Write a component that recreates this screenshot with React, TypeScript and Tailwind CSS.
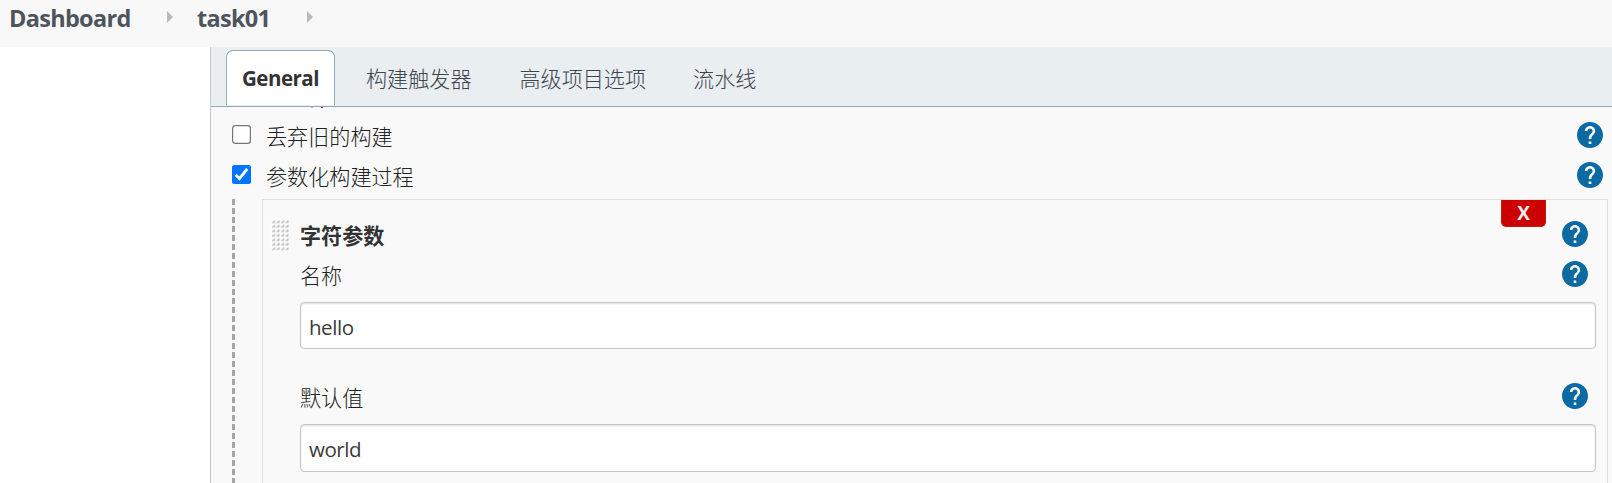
import React from "react";

function HelpIcon() {
  return (
    <svg viewBox="2 2 20 20" className="block h-[26px] w-[26px] shrink-0">
      <circle cx="12" cy="12" r="9" fill="#fff" />
      <path
        fill="#0b6aa2"
        d="M12 2C6.48 2 2 6.48 2 12s4.48 10 10 10 10-4.48 10-10S17.52 2 12 2zm1 17h-2v-2h2v2zm2.07-7.75l-.9.92C13.45 12.9 13 13.5 13 15h-2v-.5c0-1.1.45-2.1 1.17-2.83l1.24-1.26c.37-.36.59-.86.59-1.41 0-1.1-.9-2-2-2s-2 .9-2 2H8c0-2.21 1.79-4 4-4s4 1.79 4 4c0 .88-.36 1.68-.93 2.25z"
      />
    </svg>
  );
}

function Chevron() {
  return (
    <svg viewBox="0 0 6 12" className="block h-3 w-1.5 shrink-0">
      <path d="M0 0L6 6L0 12Z" fill="#bababa" />
    </svg>
  );
}

function Checkbox({ checked }: { checked?: boolean }) {
  return (
    <svg viewBox="0 0 19 19" className="mb-px block h-[19px] w-[19px] shrink-0">
      {checked ? (
        <>
          <rect width="19" height="19" rx="2.5" fill="#0075ff" />
          <path d="M3.6 9.8L7.4 13.6L15.2 4" fill="none" stroke="#fff" strokeWidth="2.8" />
        </>
      ) : (
        <rect x="0.6" y="0.6" width="17.8" height="17.8" rx="2.6" fill="#fff" stroke="#767676" strokeWidth="1.2" />
      )}
    </svg>
  );
}

function Grip() {
  return (
    <svg viewBox="0 0 18 32" className="block h-8 w-[18px] shrink-0">
      <defs>
        <pattern id="grip" width="4.5" height="4.5" patternUnits="userSpaceOnUse">
          <rect width="4.5" height="4.5" fill="#fcfcfc" />
          <path d="M1 3.9L3.9 1V3.9Z" fill="#aaa" />
          <rect x="1.2" y="2.6" width="2.6" height="1.4" fill="#c4c4c4" />
        </pattern>
      </defs>
      <rect width="18" height="31.5" fill="url(#grip)" />
    </svg>
  );
}

function OptionRow({ label, checked }: { label: string; checked?: boolean }) {
  return (
    <div className="flex h-10 items-center pr-[9px] pl-[21px]">
      <Checkbox checked={checked} />
      <span className="ml-[15px] pt-1 text-[21.1px] leading-[38px]">{label}</span>
      <div className="ml-auto">
        <HelpIcon />
      </div>
    </div>
  );
}

function FieldLabel({ label }: { label: string }) {
  return (
    <div className="flex h-10 items-center justify-between pr-[19px] pl-[37px]">
      <span className="pt-1 text-[21.1px] leading-[38px]">{label}</span>
      <HelpIcon />
    </div>
  );
}

function TextField({ value }: { value: string }) {
  return (
    <input
      defaultValue={value}
      className="ml-[37px] block h-full w-[1296px] rounded-[4px] border border-[#c6c6c6] bg-white px-2 pt-0.5 text-[20.5px] font-normal tracking-[-0.45px] text-[#3a3a3a] shadow-[inset_0_1px_2px_rgba(0,0,0,0.13)] outline-none"
    />
  );
}

export default function App() {
  return (
    <div className="flex h-[483px] w-[1612px] flex-col overflow-hidden bg-white font-['Open_Sans','Noto_Sans_CJK_SC',sans-serif] font-light text-[#222]">
      <header className="flex h-[47px] shrink-0 items-center bg-[#f8f8f8] pb-[9px] pl-[9px] text-[23.5px] font-bold text-[#4d545d]">
        <span className="w-[158px] tracking-[-0.7px]">Dashboard</span>
        <div className="pb-1"><Chevron /></div>
        <span className="ml-6 w-[110px] tracking-[-0.7px]">task01</span>
        <div className="pb-1"><Chevron /></div>
      </header>
      <div className="flex min-h-0 flex-1">
        <aside className="w-[210px] shrink-0" />
        <main className="flex min-w-0 flex-1 flex-col border-l border-[#c4c8ca] bg-[#f9f9f9]">
          <nav className="flex h-[60px] shrink-0 items-start border-b border-[#96a8b2] bg-[#e9eef1] pt-[3px] pl-[15px] text-[21.1px] text-[#3d444d]">
            <div className="flex h-[55px] w-[109px] items-center justify-center rounded-t-[7px] border border-b-0 border-[#96a8b2] bg-white pt-px text-[20.5px] font-bold tracking-[-0.5px] text-[#333]">
              General
            </div>
            <div className="ml-[31px] flex h-[57px] items-center">构建触发器</div>
            <div className="ml-12 flex h-[57px] items-center">高级项目选项</div>
            <div className="ml-[47px] flex h-[57px] items-center">流水线</div>
          </nav>
          <div className="flex h-2 shrink-0 items-start pl-[100px]">
            <i className="h-px w-0.5 bg-[#adc4d4]" />
            <i className="ml-2 h-px w-0.5 bg-[#444b60]" />
          </div>
          <OptionRow label="丢弃旧的构建" />
          <OptionRow label="参数化构建过程" checked />
          <div className="mt-[4px] flex flex-1 pl-[21px]">
            <div className="w-[3px] shrink-0 bg-[repeating-linear-gradient(to_bottom,#a5a5a5_0,#a5a5a5_6px,transparent_6px,transparent_9px)]" />
            <section className="relative ml-[27px] h-[300px] w-[1346px] shrink-0 border border-[#dedede] pt-[14px]">
              <button className="absolute top-0 right-[61px] flex h-[27px] w-[45px] items-center justify-center rounded-b-[5px] border border-t-0 border-[#b8220f] bg-[#c00] text-[19px] font-bold text-[#eee]">
                X
              </button>
              <div className="flex h-10 items-center pr-[19px] pl-2">
                <div className="pt-0.5"><Grip /></div>
                <span className="ml-[11px] pt-1 text-[21.1px] leading-[38px] font-bold text-[#333]">字符参数</span>
                <div className="ml-auto"><HelpIcon /></div>
              </div>
              <FieldLabel label="名称" />
              <div className="mt-2 h-[47px]"><TextField value="hello" /></div>
              <div className="mt-[27px]"><FieldLabel label="默认值" /></div>
              <div className="mt-2 h-12"><TextField value="world" /></div>
            </section>
          </div>
        </main>
      </div>
    </div>
  );
}
